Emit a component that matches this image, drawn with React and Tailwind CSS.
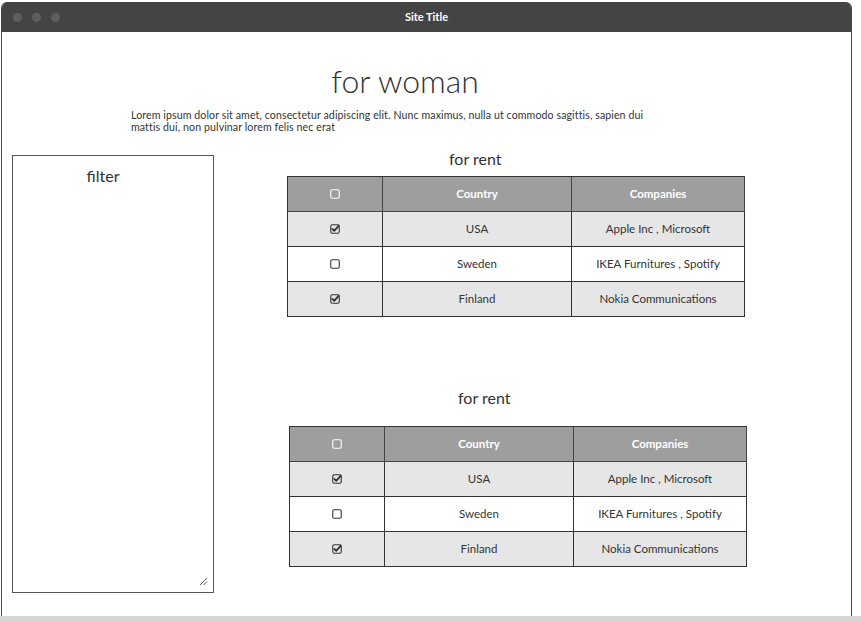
import React from "react";

const rows = [
  { checked: true, country: "USA", companies: "Apple Inc , Microsoft", bg: "bg-[#e6e6e6]" },
  { checked: false, country: "Sweden", companies: "IKEA Furnitures , Spotify", bg: "bg-white" },
  { checked: true, country: "Finland", companies: "Nokia Communications", bg: "bg-[#e6e6e6]" },
];

const Box = ({ checked, color = "#333" }) => (
  <svg width="10" height="10" viewBox="0 0 10 10" fill="none">
    <rect x="0.75" y="0.75" width="8.5" height="8.5" rx="1.5" stroke={color} strokeWidth="1.1" />
    {checked && (
      <path d="M2.3 4.9 L4.2 6.8 L8.6 1.8" stroke={color} strokeWidth="1.8" strokeLinecap="round" strokeLinejoin="round" />
    )}
  </svg>
);

const RentTable = ({ titlePad }) => (
  <div>
    <div className={`text-[16px] leading-[20px] text-[#333] ${titlePad}`}>for rent</div>
    <div className="grid grid-cols-[95px_189px_173px] border-l border-t border-[#333] w-[458px] text-[11.5px]">
      <div className="h-[35px] bg-[#9e9e9e] border-r border-b border-[#444] flex items-center justify-center">
        <Box color="#fff" />
      </div>
      <div className="h-[35px] bg-[#9e9e9e] border-r border-b border-[#444] flex items-center justify-center text-white font-bold">
        Country
      </div>
      <div className="h-[35px] bg-[#9e9e9e] border-r border-b border-[#444] flex items-center justify-center text-white font-bold">
        Companies
      </div>
      {rows.map((r) => (
        <React.Fragment key={r.country}>
          <div className={`h-[35px] ${r.bg} border-r border-b border-[#333] flex items-center justify-center`}>
            <Box checked={r.checked} />
          </div>
          <div className={`h-[35px] ${r.bg} border-r border-b border-[#333] flex items-center justify-center text-[#333]`}>
            {r.country}
          </div>
          <div className={`h-[35px] ${r.bg} border-r border-b border-[#333] flex items-center justify-center text-[#333]`}>
            {r.companies}
          </div>
        </React.Fragment>
      ))}
    </div>
  </div>
);

export default function App() {
  return (
    <div className="w-[861px] h-[621px] bg-white overflow-hidden pt-[2px] font-['Lato',sans-serif]">
      <div className="ml-[1px] w-[851px] h-[614px] flex flex-col rounded-t-[6px] border-x border-[#4a4a4a] overflow-hidden">
        <div className="h-[30px] shrink-0 bg-[#444] grid grid-cols-[1fr_auto_1fr] items-center px-[11px]">
          <div className="flex gap-[10px]">
            <span className="w-[9px] h-[9px] rounded-full bg-[#5e5e5e]" />
            <span className="w-[9px] h-[9px] rounded-full bg-[#5e5e5e]" />
            <span className="w-[9px] h-[9px] rounded-full bg-[#5e5e5e]" />
          </div>
          <div className="text-white text-[11px] font-bold">Site Title</div>
          <div />
        </div>

        <div className="flex-1">
          <h1 className="mt-[30px] w-[806px] text-center text-[32px] leading-[38px] font-light text-[#333]">
            for woman
          </h1>
          <p className="mt-[9px] ml-[129px] w-[540px] text-[10.6px] leading-[12px] text-[#333] tracking-[0.1px]">
            Lorem ipsum dolor sit amet, consectetur adipiscing elit. Nunc maximus, nulla ut commodo sagittis, sapien dui{" "}
            <br />
            mattis dui, non pulvinar lorem felis nec erat
          </p>

          <div className="flex mt-[16px] ml-[10px]">
            <div className="relative mt-[6px] w-[202px] h-[438px] border border-[#555] shrink-0">
              <div className="pt-[10px] pr-[20px] text-center text-[16px] leading-[20px] text-[#333]">filter</div>
              <svg className="absolute right-[5px] bottom-[6px]" width="9" height="9" viewBox="0 0 9 9">
                <path d="M1 8 L8 1 M4.5 8 L8 4.5" stroke="#555" strokeWidth="1" />
              </svg>
            </div>

            <div className="ml-[73px]">
              <div className="[&>div>div:first-child]:mb-[7px]">
                <RentTable titlePad="pl-[162px]" />
              </div>
              <div className="ml-[2px] mt-[71px] [&>div>div:first-child]:mb-[18px]">
                <RentTable titlePad="pl-[169px]" />
              </div>
            </div>
          </div>
        </div>
      </div>
      <div className="h-[5px] bg-[#d5d5d5]" />
    </div>
  );
}
